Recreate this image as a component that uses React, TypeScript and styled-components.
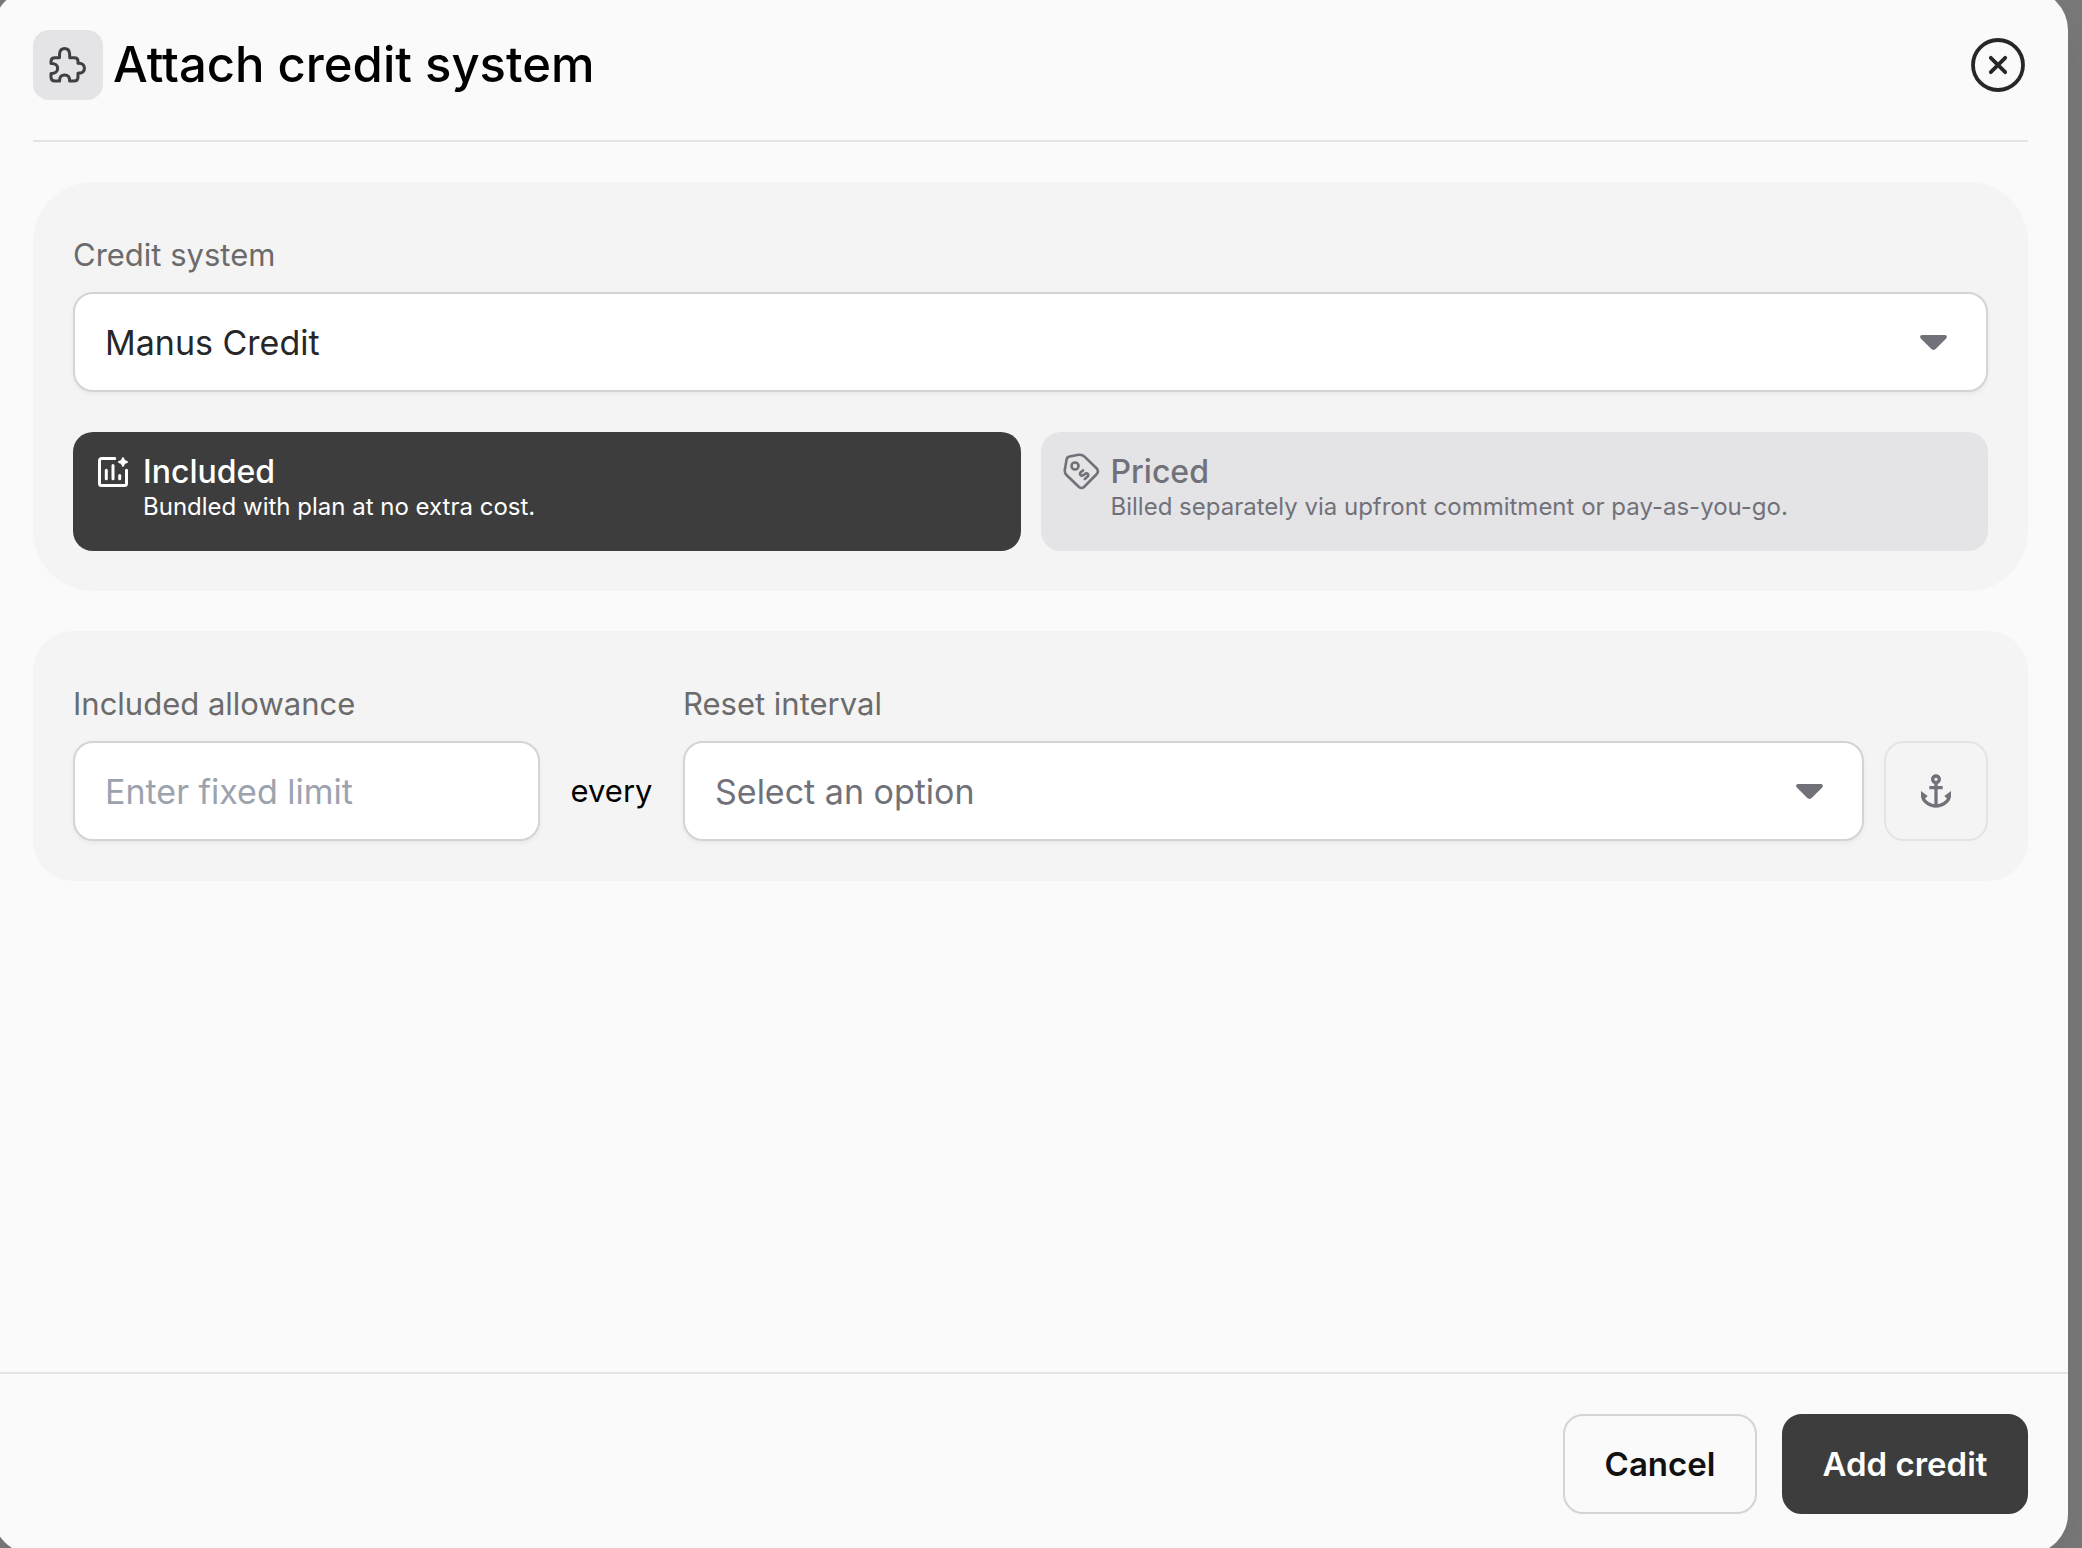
import { useState } from "react";
import styled, { createGlobalStyle } from "styled-components";
import { MdAnchor } from "react-icons/md";

const GlobalStyle = createGlobalStyle`
  *, *::before, *::after {
    box-sizing: border-box;
  }
  body {
    margin: 0;
    background: #797979;
    color: #000;
    font-family: Inter, "Noto Sans", sans-serif;
  }
  button, input, select {
    margin: 0;
    font-family: inherit;
  }
`;

const Backdrop = styled.div`
  display: flex;
  min-height: 100vh;
  overflow: hidden;
`;

const Dialog = styled.form`
  flex: 1;
  display: flex;
  flex-direction: column;
  margin: -10px 14px -6px -7px;
  border-radius: 40px;
  background: #fafafa;
  box-shadow: 0 20px 50px rgba(0, 0, 0, 0.08);
`;

const Header = styled.header`
  display: flex;
  align-items: center;
  gap: 10px;
  margin: 0 40px;
  padding: 40px 0;
  border-bottom: 2px solid #e4e4e4;
`;

const HeaderIcon = styled.span`
  display: flex;
  align-items: center;
  justify-content: center;
  width: 70px;
  height: 70px;
  border-radius: 16px;
  background: #e4e4e6;
  color: #3f3f46;
`;

const Title = styled.h1`
  flex: 1;
  margin: 0;
  font-size: 49px;
  font-weight: 500;
  line-height: 70px;
`;

const CloseButton = styled.button`
  display: flex;
  padding: 0;
  border: 0;
  background: none;
  color: #27272a;
  cursor: pointer;
`;

const Body = styled.div`
  flex: 1;
  display: flex;
  flex-direction: column;
  gap: 40px;
  padding: 40px;
`;

const Card = styled.section<{ $radius: number }>`
  padding: 40px;
  border-radius: ${(p) => p.$radius}px;
  background: #f4f4f4;
`;

const Label = styled.label`
  display: block;
  padding: 10px 0 14px;
  color: #6b6b6b;
  font-size: 31px;
  line-height: 46px;
`;

const SelectBox = styled.div`
  position: relative;
`;

const Select = styled.select<{ $empty?: boolean }>`
  display: block;
  width: 100%;
  height: 100px;
  padding: 0 100px 0 30px;
  border: 2px solid #d4d4d8;
  border-radius: 20px;
  background: #fff;
  box-shadow: 0 2px 4px rgba(0, 0, 0, 0.05);
  color: ${(p) => (p.$empty ? "#71717a" : "#27272a")};
  font-size: 34px;
  appearance: none;
`;

const Caret = styled.svg`
  position: absolute;
  top: 43px;
  right: 41px;
  pointer-events: none;
`;

const TextInput = styled.input`
  display: block;
  width: 100%;
  height: 100px;
  padding: 0 30px;
  border: 2px solid #d4d4d8;
  border-radius: 20px;
  background: #fff;
  box-shadow: 0 2px 4px rgba(0, 0, 0, 0.05);
  color: #27272a;
  font-size: 34px;

  &::placeholder {
    color: #9ca3af;
    opacity: 1;
  }
`;

const Options = styled.div`
  display: grid;
  grid-template-columns: 1fr 1fr;
  gap: 20px;
  margin-top: 40px;
`;

const Option = styled.button<{ $active: boolean }>`
  display: flex;
  align-items: flex-start;
  gap: 10px;
  padding: 20px 20px 29px;
  border: 0;
  border-radius: 20px;
  background: ${(p) => (p.$active ? "#3d3d3d" : "#e4e4e6")};
  color: ${(p) => (p.$active ? "#fff" : "#71717a")};
  text-align: left;
  cursor: pointer;
`;

const OptionIcon = styled.span`
  display: flex;
  align-items: center;
  justify-content: center;
  width: 40px;
  height: 40px;
`;

const OptionText = styled.span`
  display: flex;
  flex-direction: column;
`;

const OptionTitle = styled.span`
  font-size: 32px;
  font-weight: 500;
  line-height: 40px;
`;

const OptionHint = styled.span`
  font-size: 24px;
  line-height: 30px;
`;

const AllowanceRow = styled.div`
  display: grid;
  grid-template-columns: 467px 143px 1fr 104px;
  align-items: end;
`;

const Joiner = styled.span`
  font-size: 31px;
  line-height: 100px;
  text-align: center;
`;

const AnchorButton = styled.button`
  display: flex;
  align-items: center;
  justify-content: center;
  height: 100px;
  padding: 0;
  border: 2px solid #e4e4e7;
  border-radius: 20px;
  background: none;
  color: #71717a;
  cursor: pointer;
`;

const IntervalField = styled.div`
  margin-right: 20px;
`;

const Footer = styled.footer`
  display: flex;
  justify-content: flex-end;
  gap: 25px;
  padding: 40px;
  border-top: 2px solid #e4e4e4;
`;

const FooterButton = styled.button<{ $primary?: boolean }>`
  min-width: ${(p) => (p.$primary ? 246 : 194)}px;
  height: 100px;
  padding: 0 38px;
  border: 2px solid ${(p) => (p.$primary ? "#3d3d3d" : "#d4d4d8")};
  border-radius: 20px;
  background: ${(p) => (p.$primary ? "#3d3d3d" : "#fafafa")};
  color: ${(p) => (p.$primary ? "#fff" : "#111")};
  font-size: 33px;
  font-weight: 600;
  cursor: pointer;
`;

function PuzzleIcon() {
  return (
    <svg width="40" height="40" viewBox="0 0 40 40" fill="none" stroke="currentColor" strokeWidth="3" strokeLinecap="round" strokeLinejoin="round" aria-hidden="true">
      <path d="M11.4 12.800C11.600 12 11.400 10.200 11.600 8.600C12 5.400 14 3.600 16.600 3.600S21.200 5.400 21.600 8.600C21.800 10.200 21.600 12 21.800 12.800H26.400C28.800 12.800 30 14 30 16.200V18.200C30.600 18.600 31.400 18.200 32.400 18.400C35 19 36.400 20.800 36.400 23.200S35 27.400 32.400 28C31.400 28.200 30.600 27.800 30 28.200V32C30 34.800 28.600 36 26 36H21.600C21.800 32 20 30 16.600 30S11.400 32 11.600 36H7C4.400 36 3 34.800 3 32V28.400C7.400 28.600 9.600 26.600 9.600 23.400S7.400 18.200 3 18.400V16.600C3 14 4.400 12.800 7 12.800Z" />
    </svg>
  );
}

function CloseIcon() {
  return (
    <svg width="60" height="60" viewBox="0 0 60 60" fill="none" stroke="currentColor" strokeLinecap="round" aria-hidden="true">
      <circle cx="30" cy="30" r="25" strokeWidth="3.8" />
      <path d="M22.8 22.8L37.2 37.2M37.2 22.8L22.8 37.2" strokeWidth="3.8" />
    </svg>
  );
}

function ChartSparkleIcon() {
  return (
    <svg width="30" height="30" viewBox="0 0 30 30" fill="none" stroke="currentColor" strokeWidth="3" strokeLinecap="round" strokeLinejoin="round" aria-hidden="true">
      <path d="M16.8 1.5H3.5a2 2 0 0 0-2 2v23a2 2 0 0 0 2 2h23a2 2 0 0 0 2-2V13.2" />
      <path d="M8.3 13.2v8.6M15 8.6v13.2M21.7 18.4v3.4" />
      <path d="M25 0c1 0 1.400 2.400 2 3s3 1 3 2-2.400 1.400-3 2-1 3-2 3-1.400-2.400-2-3-3-1-3-2 2.400-1.400 3-2 1-3 2-3z" fill="currentColor" stroke="none" />
    </svg>
  );
}

function PriceTagIcon() {
  return (
    <svg width="38" height="38" viewBox="-1 0 38 38" fill="none" stroke="currentColor" strokeWidth="2.6" strokeLinecap="round" strokeLinejoin="round" aria-hidden="true">
      <path d="M6.5 3.5L15.5 1.8Q19 1.2 21.5 3.7L33.8 15.5Q36 18.5 33.8 21L21 34Q18.5 36 16 34L3.5 22Q1.5 20 1.8 17L3.6 6.5Q4 4 6.5 3.5Z" />
      <circle cx="12" cy="13" r="3.500" />
      <path d="M20 17.4L17.4 19.6Q16.2 21.4 18.2 22.6Q20 23 21.4 21.4Q23.6 19.6 25 21.2Q25.8 22.6 24.4 23.8L21.8 26" />
    </svg>
  );
}

function SelectCaret() {
  return (
    <Caret width="27" height="15" viewBox="0 0 27 15" fill="#71717a" aria-hidden="true">
      <path d="M2 0H25C26.8 0 27.5 2.2 26.2 3.6L16.2 13.6C14.6 15.3 12.4 15.3 10.8 13.6L0.8 3.6C-0.5 2.2 0.2 0 2 0Z" />
    </Caret>
  );
}

export default function App() {
  const [mode, setMode] = useState<"included" | "priced">("included");
  const [interval, setInterval] = useState("");

  return (
    <>
      <GlobalStyle />
      <Backdrop>
        <Dialog role="dialog" aria-labelledby="dialog-title" onSubmit={(e) => e.preventDefault()}>
          <Header>
            <HeaderIcon>
              <PuzzleIcon />
            </HeaderIcon>
            <Title id="dialog-title">Attach credit system</Title>
            <CloseButton type="button" aria-label="Close">
              <CloseIcon />
            </CloseButton>
          </Header>

          <Body>
            <Card $radius={60}>
              <Label htmlFor="credit-system">Credit system</Label>
              <SelectBox>
                <Select id="credit-system" defaultValue="manus">
                  <option value="manus">Manus Credit</option>
                </Select>
                <SelectCaret />
              </SelectBox>
              <Options>
                <Option type="button" $active={mode === "included"} aria-pressed={mode === "included"} onClick={() => setMode("included")}>
                  <OptionIcon>
                    <ChartSparkleIcon />
                  </OptionIcon>
                  <OptionText>
                    <OptionTitle>Included</OptionTitle>
                    <OptionHint>Bundled with plan at no extra cost.</OptionHint>
                  </OptionText>
                </Option>
                <Option type="button" $active={mode === "priced"} aria-pressed={mode === "priced"} onClick={() => setMode("priced")}>
                  <OptionIcon>
                    <PriceTagIcon />
                  </OptionIcon>
                  <OptionText>
                    <OptionTitle>Priced</OptionTitle>
                    <OptionHint>Billed separately via upfront commitment or pay-as-you-go.</OptionHint>
                  </OptionText>
                </Option>
              </Options>
            </Card>

            <Card $radius={40}>
              <AllowanceRow>
                <div>
                  <Label htmlFor="allowance">Included allowance</Label>
                  <TextInput id="allowance" inputMode="numeric" placeholder="Enter fixed limit" />
                </div>
                <Joiner>every</Joiner>
                <IntervalField>
                  <Label htmlFor="interval">Reset interval</Label>
                  <SelectBox>
                    <Select id="interval" value={interval} $empty={interval === ""} onChange={(e) => setInterval(e.target.value)}>
                      <option value="">Select an option</option>
                    </Select>
                    <SelectCaret />
                  </SelectBox>
                </IntervalField>
                <AnchorButton type="button" aria-label="Anchor reset date">
                  <MdAnchor size={40} />
                </AnchorButton>
              </AllowanceRow>
            </Card>
          </Body>

          <Footer>
            <FooterButton type="button">Cancel</FooterButton>
            <FooterButton type="submit" $primary>
              Add credit
            </FooterButton>
          </Footer>
        </Dialog>
      </Backdrop>
    </>
  );
}
